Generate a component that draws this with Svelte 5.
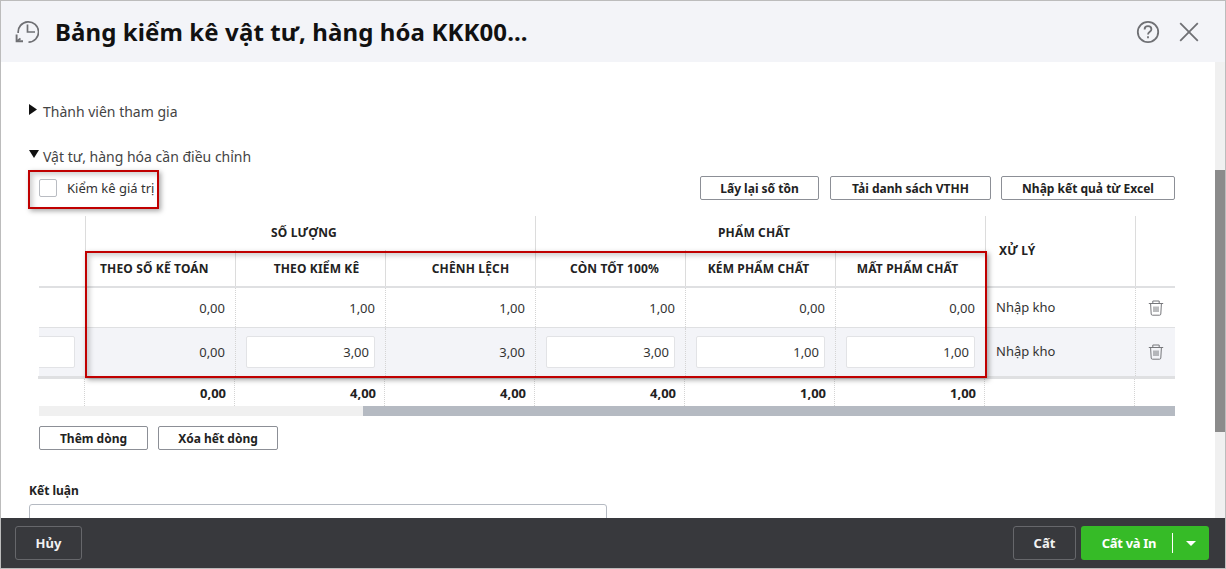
<script>
    // shift = how far the title sits from the centre of its column
    const subHeads = [
        { title: 'THEO SỐ KẾ TOÁN', shift: 0 },
        { title: 'THEO KIỂM KÊ', shift: 6 },
        { title: 'CHÊNH LỆCH', shift: 10 },
        { title: 'CÒN TỐT 100%', shift: 4 },
        { title: 'KÉM PHẨM CHẤT', shift: -2 },
        { title: 'MẤT PHẨM CHẤT', shift: -3 }
    ];

    const rows = [
        { values: ['0,00', '1,00', '1,00', '1,00', '0,00', '0,00'], editable: [] },
        { values: ['0,00', '3,00', '3,00', '3,00', '1,00', '1,00'], editable: [1, 3, 4, 5] }
    ];

    const totals = ['0,00', '4,00', '4,00', '4,00', '1,00', '1,00'];
</script>

<div class="window">
    <header class="head">
        <svg class="history" width="24" height="24" viewBox="0 0 24 24" fill="none" stroke="#6f7074" stroke-width="1.7">
            <path d="M13.5 22.2A10.2 10.2 0 1 0 3.2 13" />
            <path d="M1.6 14.5V21.2H8" stroke-width="1.9" />
            <path d="M5.5 18.5L2 21" />
            <path d="M12.5 4.5V12H20" />
        </svg>
        <h1>Bảng kiểm kê vật tư, hàng hóa KKK00...</h1>
        <svg class="help" width="24" height="24" viewBox="0 0 24 24" fill="none" stroke="#6f7074" stroke-width="1.8">
            <circle cx="12" cy="12" r="10.2" />
            <path d="M8.6 9.4c0-2 1.5-3.2 3.4-3.2s3.4 1.2 3.4 3c0 2.6-3.4 2.6-3.4 5.4" />
            <path d="M12 16.2v2" />
        </svg>
        <svg class="close" width="20" height="20" viewBox="0 0 20 20" fill="none" stroke="#6f7074" stroke-width="1.8">
            <path d="M1.2 1.2l17.6 17.6M18.8 1.2L1.2 18.8" />
        </svg>
    </header>

    <div class="middle">
        <main class="content">
            <div class="section">
                <svg class="tri" width="8" height="11" viewBox="0 0 8 11"><path d="M0 0l8 5.5L0 11z" /></svg>
                Thành viên tham gia
            </div>
            <div class="section second">
                <svg class="tri down" width="10" height="8" viewBox="0 0 10 8"><path d="M0 0h10L5 8z" /></svg>
                Vật tư, hàng hóa cần điều chỉnh
            </div>

            <div class="toolbar">
                <label class="check">
                    <span class="box"></span>
                    Kiểm kê giá trị
                    <span class="mark mark-check"></span>
                </label>
                <div class="actions">
                    <button class="btn w118">Lấy lại số tồn</button>
                    <button class="btn w161">Tải danh sách VTHH</button>
                    <button class="btn w174">Nhập kết quả từ Excel</button>
                </div>
            </div>

            <div class="grid-wrap">
                <div class="grid head-grid">
                    <div class="hcell blank"></div>
                    <div class="hcell group g3">SỐ LƯỢNG</div>
                    <div class="hcell group g3b">PHẨM CHẤT</div>
                    <div class="hcell tall xuly">XỬ LÝ</div>
                    <div class="hcell tall tools"></div>
                    {#each subHeads as head, i}
                        <div class="hcell sub" class:first={i === 0}>
                            <span style="transform: translateX({head.shift}px)">{head.title}</span>
                        </div>
                    {/each}
                </div>

                {#each rows as row, r}
                    <div class="grid row" class:alt={r === 1}>
                        <div class="cell lead">
                            {#if r === 1}<span class="input cut"></span>{/if}
                        </div>
                        {#each row.values as value, i}
                            <div class="cell num">
                                {#if row.editable.includes(i)}
                                    <span class="input">{value}</span>
                                {:else}
                                    {value}
                                {/if}
                            </div>
                        {/each}
                        <div class="cell text">Nhập kho</div>
                        <div class="cell trash">
                            <svg width="16" height="16" viewBox="0 0 16 16" fill="none" stroke="#77787c" stroke-width="1">
                                <path d="M0.8 3.5h14.4M4.8 3.2V1h6.4v2.2M2.6 3.8l.6 10.2c0 .7.5 1.2 1.2 1.2h7.2c.7 0 1.2-.5 1.2-1.2l.6-10.2" />
                                <path d="M6 6.5v5.5M8 6.5v5.5M10 6.5v5.5" />
                            </svg>
                        </div>
                    </div>
                {/each}

                <div class="grid totals">
                    <div class="tcell"></div>
                    {#each totals as value}
                        <div class="tcell num">{value}</div>
                    {/each}
                    <div class="tcell"></div>
                    <div class="tcell"></div>
                </div>

                <div class="hscroll"><div class="hthumb"></div></div>
                <span class="mark mark-grid"></span>
            </div>

            <div class="row-btns">
                <button class="btn w109">Thêm dòng</button>
                <button class="btn w120">Xóa hết dòng</button>
            </div>

            <div class="field-label">Kết luận</div>
            <div class="textarea"></div>
        </main>
        <div class="vscroll"><div class="vthumb"></div></div>
    </div>

    <footer class="foot">
        <button class="dark cancel">Hủy</button>
        <div class="foot-right">
            <button class="dark save">Cất</button>
            <button class="green">
                <span class="green-label">Cất và In</span>
                <span class="green-arrow"><svg width="10" height="5" viewBox="0 0 10 5"><path d="M0 0h10L5 5z" fill="#fff" /></svg></span>
            </button>
        </div>
    </footer>
</div>

<style>
    :global(body) {
        margin: 0;
        background: #fff;
        font-family: "Noto Sans", "Open Sans", sans-serif;
    }

    .window {
        box-sizing: border-box;
        width: 1226px;
        height: 569px;
        display: flex;
        flex-direction: column;
        border: 1px solid #bcbcbc;
        overflow: hidden;
        color: #333;
        font-size: 13px;
    }

    /* header */
    .head {
        flex: none;
        height: 61px;
        display: flex;
        align-items: center;
        background: #f3f4f8;
    }

    .history {
        margin-left: 14px;
        margin-top: 1px;
    }

    h1 {
        flex: 1;
        margin: 0 0 0 16px;
        font-size: 24px;
        font-weight: 700;
        letter-spacing: .1px;
        color: #111;
        line-height: 32px;
    }

    .help {
        margin-right: 19px;
    }

    .close {
        margin-right: 26px;
    }

    /* scrolling part */
    .middle {
        flex: 1;
        min-height: 0;
        display: flex;
    }

    .content {
        flex: 1;
        min-width: 0;
        padding: 40px 40px 0 28px;
        overflow: hidden;
    }

    .vscroll {
        flex: none;
        width: 10px;
        background: #f0f0f0;
    }

    .vthumb {
        margin-top: 108px;
        height: 262px;
        background: #8b8b8b;
    }

    .section {
        position: relative;
        height: 20px;
        line-height: 20px;
        padding-left: 14px;
        font-size: 14px;
        color: #444;
    }

    .second {
        margin-top: 25px;
    }

    .tri {
        position: absolute;
        left: 0;
        top: 2px;
        fill: #111;
    }

    .tri.down {
        top: 3px;
    }

    .toolbar {
        display: flex;
        justify-content: space-between;
        align-items: center;
        height: 24px;
        margin: 9px 0 16px 10px;
    }

    .check {
        position: relative;
        display: flex;
        align-items: center;
        gap: 10px;
        font-size: 13px;
        color: #333;
    }

    .box {
        box-sizing: border-box;
        width: 18px;
        height: 18px;
        border: 1px solid #b9bcc2;
        border-radius: 2px;
        background: #fff;
    }

    .actions {
        display: flex;
        gap: 11px;
    }

    .btn {
        box-sizing: border-box;
        height: 24px;
        padding: 0;
        border: 1px solid #8c8f96;
        border-radius: 2px;
        background: #fff;
        font: 700 12px "Noto Sans", sans-serif;
        color: #222;
    }

    .w109 { width: 109px; }
    .w118 { width: 119px; }
    .w120 { width: 120px; }
    .w161 { width: 161px; }
    .w174 { width: 174px; }

    .actions .w161 + .w174 {
        margin-left: -1px;
    }

    /* table */
    .grid-wrap {
        position: relative;
        margin-left: 10px;
    }

    .grid {
        display: grid;
        grid-template-columns: 46px repeat(7, 150px) 40px;
    }

    .head-grid {
        grid-template-rows: 34px 36px;
        border-bottom: 2px solid #dfe0e2;
        font-weight: 700;
        font-size: 12px;
        letter-spacing: .15px;
        color: #222;
    }

    .hcell {
        display: flex;
        align-items: center;
        justify-content: center;
        border-left: 1px solid #dcdcdc;
    }

    .blank {
        grid-row: span 2;
        border-left: none;
    }

    .group {
        padding: 0 13px 2px 0;
    }

    .g3, .g3b {
        grid-column: span 3;
    }

    .tall {
        grid-row: span 2;
    }

    .xuly {
        justify-content: flex-start;
        padding: 0 0 2px 13px;
    }

    .first {
        justify-content: flex-start;
        padding-left: 14px;
    }

    .row {
        height: 39px;
        border-bottom: 1px solid #dfe0e2;
    }

    .row.alt {
        height: 48px;
        border-bottom: none;
        background: #f3f4f8;
    }

    .cell {
        display: flex;
        align-items: center;
        border-left: 1px dotted #d4d4d4;
        min-width: 0;
        overflow: hidden;
    }

    .lead {
        border-left: none;
    }

    .num {
        justify-content: flex-end;
        padding-right: 10px;
    }

    .text {
        padding-left: 10px;
        padding-bottom: 2px;
    }

    .trash {
        justify-content: center;
        padding-left: 1px;
    }

    .input {
        box-sizing: border-box;
        flex: none;
        width: 129px;
        height: 32px;
        line-height: 30px;
        padding-right: 5px;
        border: 1px solid #e2e3e6;
        border-radius: 2px;
        background: #fff;
        text-align: right;
    }

    .input.cut {
        width: 56px;
        margin-left: -20px;
    }

    .totals {
        height: 27px;
        margin-left: -1px;
        border-top: 3px solid #dfe0e2;
        font-weight: 700;
    }

    .tcell {
        display: flex;
        align-items: center;
        border-left: 1px dotted #d4d4d4;
        color: #222;
    }

    .tcell:first-child {
        border-left: none;
    }

    .tcell.num {
        padding-right: 8px;
    }

    .hscroll {
        height: 10px;
        background: #f0f0f0;
    }

    .hthumb {
        height: 100%;
        margin-left: 324px;
        background: #b5bac2;
    }

    /* red callouts drawn on the screenshot */
    .mark {
        position: absolute;
        box-sizing: border-box;
        border: 2px solid #c00000;
        box-shadow: 2px 2px 5px rgba(0, 0, 0, .35), inset 3px 3px 5px rgba(0, 0, 0, .18);
        pointer-events: none;
    }

    .mark-check {
        left: -11px;
        top: -9px;
        width: 131px;
        height: 39px;
    }

    .mark-grid {
        left: 46px;
        top: 35px;
        width: 902px;
        height: 127px;
    }

    .row-btns {
        display: flex;
        gap: 10px;
        margin: 10px 0 0 10px;
    }

    .field-label {
        margin-top: 32px;
        height: 18px;
        line-height: 18px;
        font-size: 12px;
        font-weight: 700;
        color: #222;
    }

    .textarea {
        box-sizing: border-box;
        margin-top: 4px;
        width: 578px;
        height: 60px;
        border: 1px solid #b5bac2;
        border-radius: 3px;
    }

    /* footer */
    .foot {
        flex: none;
        height: 50px;
        display: flex;
        align-items: center;
        justify-content: space-between;
        padding: 0 16px 0 14px;
        background: #38393d;
    }

    .foot-right {
        display: flex;
        gap: 5px;
    }

    .dark {
        box-sizing: border-box;
        height: 34px;
        padding: 0;
        border: 1px solid #66676b;
        border-radius: 3px;
        background: transparent;
        color: #f2f2f2;
        font: 700 13px "Noto Sans", sans-serif;
    }

    .cancel {
        width: 67px;
    }

    .save {
        width: 63px;
    }

    .green {
        box-sizing: border-box;
        display: flex;
        align-items: center;
        width: 128px;
        height: 34px;
        padding: 0;
        border: none;
        border-radius: 3px;
        background: #36bb27;
        color: #fff;
        font: 700 13px "Noto Sans", sans-serif;
    }

    .green-label {
        flex: 1;
        height: 20px;
        line-height: 20px;
        padding-left: 5px;
        letter-spacing: -.3px;
        border-right: 1px solid #fff;
    }

    .green-arrow {
        flex: none;
        width: 36px;
        display: flex;
        justify-content: center;
    }
</style>
